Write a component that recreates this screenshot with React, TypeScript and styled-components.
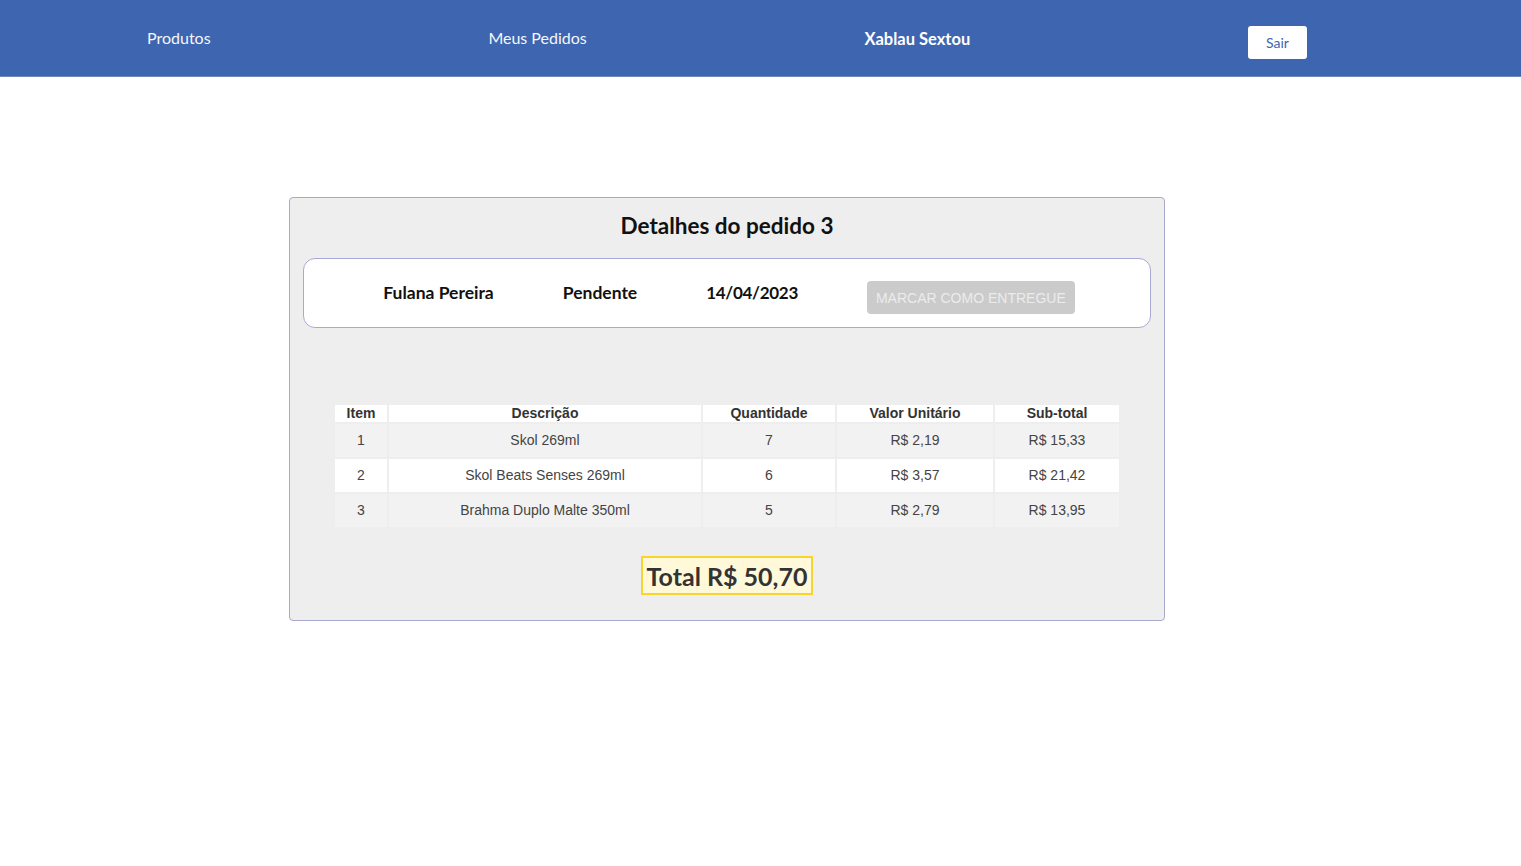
import React from "react";
import styled, { createGlobalStyle } from "styled-components";

const GlobalStyle = createGlobalStyle`
  * { box-sizing: border-box; }
  html, body { margin: 0; padding: 0; background: #ffffff; }
  body { font-family: Lato, "Noto Sans", sans-serif; }
`;

const Nav = styled.header`
  height: 77px;
  background: #3e65b0;
  border-bottom: 1px solid #6f86b8;
  display: flex;
  align-items: center;
  justify-content: space-between;
  padding: 0 214px 0 147px;
`;

const NavLink = styled.a<{ $bold?: boolean }>`
  color: #ffffff;
  font-family: Lato, "Noto Sans", sans-serif;
  font-size: ${(p) => (p.$bold ? "16.5px" : "16px")};
  font-weight: ${(p) => (p.$bold ? 700 : 400)};
  text-decoration: none;
  margin: ${(p) => (p.$bold ? "1px 0 0" : "0 0 2px")};
  opacity: ${(p) => (p.$bold ? 1 : 0.95)};
`;

const LogoutButton = styled.button`
  width: 59px;
  height: 33px;
  margin-top: 9px;
  background: #ffffff;
  color: #3e65b0;
  border: none;
  border-radius: 3px;
  font-family: Lato, "Noto Sans", sans-serif;
  font-size: 14px;
  cursor: pointer;
`;

const Main = styled.main`
  padding: 120px 0 0 289px;
`;

const Card = styled.section`
  width: 876px;
  height: 424px;
  background: #eeeeee;
  border: 1px solid #a9a8cf;
  border-radius: 4px;
  padding: 13px 13px 0;
  display: flex;
  flex-direction: column;
  align-items: center;
`;

const Title = styled.h1`
  margin: 0;
  font-family: Lato, "Noto Sans", sans-serif;
  font-size: 22.5px;
  font-weight: 700;
  color: #111111;
  line-height: 30px;
`;

const InfoBox = styled.div`
  margin-top: 17px;
  align-self: stretch;
  height: 70px;
  background: #ffffff;
  border: 1px solid #a9a8d6;
  border-radius: 12px;
  display: flex;
  align-items: center;
  justify-content: center;
  gap: 69px;
  padding-left: 4px;
`;

const InfoText = styled.span`
  font-family: Lato, "Noto Sans", sans-serif;
  font-size: 17.5px;
  font-weight: 700;
  color: #111111;
  margin-top: -2px;
`;

const DateText = styled(InfoText)`
  font-size: 17px;
  letter-spacing: -0.3px;
`;

const DeliverButton = styled.button`
  height: 33px;
  padding: 0 9px;
  background: #cbcbcb;
  color: #ececec;
  border: none;
  border-radius: 4px;
  font-family: "Liberation Sans", Arial, sans-serif;
  font-size: 14px;
  text-transform: uppercase;
  margin-top: 9px;
`;

const Table = styled.table`
  margin-top: 75px;
  width: 788px;
  border-collapse: separate;
  border-spacing: 2px;
  font-family: "Liberation Sans", Arial, sans-serif;
  font-size: 14px;
`;

const HeadCell = styled.th<{ $w?: number }>`
  background: #ffffff;
  color: #333333;
  font-weight: 700;
  height: 17px;
  padding: 0;
  line-height: 17px;
  text-align: center;
  width: ${(p) => (p.$w ? `${p.$w}px` : "auto")};
`;

const Row = styled.tr<{ $odd: boolean }>`
  background: ${(p) => (p.$odd ? "#f2f2f2" : "#ffffff")};
`;

const Cell = styled.td`
  height: 33px;
  padding: 0 0 2px;
  text-align: center;
  color: #444444;
  vertical-align: middle;
  line-height: 16px;
`;

const TotalBox = styled.div`
  margin-top: 27px;
  width: 172px;
  height: 39px;
  background: #fff9d9;
  border: 2px solid #f6d431;
  display: flex;
  align-items: center;
  justify-content: center;
  font-family: Lato, "Noto Sans", sans-serif;
  font-size: 25px;
  font-weight: 700;
  color: #333333;
`;

const items = [
  { id: 1, desc: "Skol 269ml", qty: 7, unit: "R$ 2,19", sub: "R$ 15,33" },
  { id: 2, desc: "Skol Beats Senses 269ml", qty: 6, unit: "R$ 3,57", sub: "R$ 21,42" },
  { id: 3, desc: "Brahma Duplo Malte 350ml", qty: 5, unit: "R$ 2,79", sub: "R$ 13,95" },
];

export default function App() {
  return (
    <>
      <GlobalStyle />
      <Nav>
        <NavLink href="#">Produtos</NavLink>
        <NavLink href="#">Meus Pedidos</NavLink>
        <NavLink $bold>Xablau Sextou</NavLink>
        <LogoutButton>Sair</LogoutButton>
      </Nav>
      <Main>
        <Card>
          <Title>Detalhes do pedido 3</Title>
          <InfoBox>
            <InfoText>Fulana Pereira</InfoText>
            <InfoText>Pendente</InfoText>
            <DateText>14/04/2023</DateText>
            <DeliverButton disabled>Marcar como entregue</DeliverButton>
          </InfoBox>
          <Table>
            <thead>
              <tr>
                <HeadCell $w={52}>Item</HeadCell>
                <HeadCell $w={312}>Descrição</HeadCell>
                <HeadCell $w={132}>Quantidade</HeadCell>
                <HeadCell $w={156}>Valor Unitário</HeadCell>
                <HeadCell>Sub-total</HeadCell>
              </tr>
            </thead>
            <tbody>
              {items.map((it, i) => (
                <Row key={it.id} $odd={i % 2 === 0}>
                  <Cell>{it.id}</Cell>
                  <Cell>{it.desc}</Cell>
                  <Cell>{it.qty}</Cell>
                  <Cell>{it.unit}</Cell>
                  <Cell>{it.sub}</Cell>
                </Row>
              ))}
            </tbody>
          </Table>
          <TotalBox>Total R$ 50,70</TotalBox>
        </Card>
      </Main>
    </>
  );
}
